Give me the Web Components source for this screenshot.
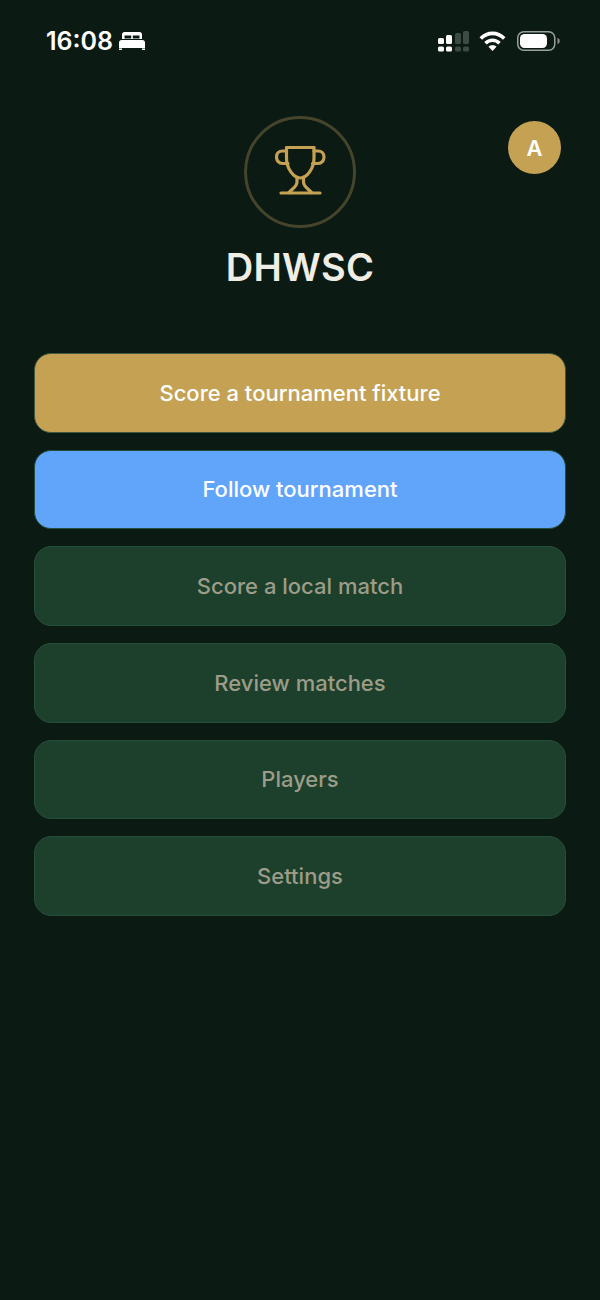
<!DOCTYPE html>
<html lang="en">
<head>
<meta charset="utf-8">
<title>DHWSC</title>
<style>
    html, body { margin: 0; height: 100%; background: #0c1a14; }
    body { font-family: Inter, "Liberation Sans", sans-serif; }
</style>
</head>
<body>
<home-screen>
    <status-bar slot="status" time="16:08"></status-bar>
    <club-header slot="header" name="DHWSC"></club-header>
    <avatar-badge slot="avatar">A</avatar-badge>
    <menu-button variant="gold">Score a tournament fixture</menu-button>
    <menu-button variant="blue">Follow tournament</menu-button>
    <menu-button>Score a local match</menu-button>
    <menu-button>Review matches</menu-button>
    <menu-button>Players</menu-button>
    <menu-button>Settings</menu-button>
</home-screen>
<script>
class HomeScreen extends HTMLElement {
    constructor() {
        super();
        this.attachShadow({ mode: 'open' });
        this.shadowRoot.innerHTML = `
            <style>
                :host { display: block; height: 1300px; position: relative; background: #0c1a14; overflow: hidden; }
                .menu { display: flex; flex-direction: column; gap: 17px; padding: 0 34px; }
                ::slotted(avatar-badge) { position: absolute; top: 121px; left: 508px; }
            </style>
            <slot name="status"></slot>
            <slot name="header"></slot>
            <slot name="avatar"></slot>
            <div class="menu"><slot></slot></div>
        `;
    }
}

class StatusBar extends HTMLElement {
    constructor() {
        super();
        this.attachShadow({ mode: 'open' });
    }

    connectedCallback() {
        this.shadowRoot.innerHTML = `
            <style>
                :host { display: flex; justify-content: space-between; align-items: center; height: 82px; padding: 0 40px 0 46px; box-sizing: border-box; color: #fff; }
                .left { display: flex; align-items: center; gap: 6px; font: 600 25px/1 Inter, sans-serif; }
                .right { display: flex; align-items: center; gap: 10px; }
                svg { display: block; }
            </style>
            <div class="left">
                <span>${this.getAttribute('time')}</span>
                <svg width="26" height="18" viewBox="0 0 26 18" fill="#fff">
                    <path fill-rule="evenodd" d="M3 2.500C3 1 4 0 5.500 0h15C22 0 23 1 23 2.500V7H3zM5.500 3.500V6.500h6.700V3.500zM13.800 3.500V6.500h6.700V3.500z"/>
                    <path d="M2.500 8h21c1.200 0 2.500 1 2.500 2.500V16H0v-5.500C0 9 1.300 8 2.500 8zM0 16.500h3V18H0zM23 16.500h3V18h-3z"/>
                </svg>
            </div>
            <div class="right">
                <svg width="31" height="21" viewBox="0 0 31 21">
                    <g fill="#fff">
                        <rect x="0" y="7" width="6" height="6" rx="1.500"/>
                        <rect x="0" y="15.500" width="6" height="5" rx="1.500"/>
                        <rect x="8" y="4" width="6" height="9" rx="1.500"/>
                        <rect x="8" y="15.500" width="6" height="5" rx="1.500"/>
                    </g>
                    <g fill="#3e4a44">
                        <rect x="17" y="2" width="6" height="11" rx="1.500"/>
                        <rect x="17" y="15.500" width="6" height="5" rx="1.500"/>
                        <rect x="25" y="0" width="6" height="13" rx="1.500"/>
                        <rect x="25" y="15.500" width="6" height="5" rx="1.500"/>
                    </g>
                </svg>
                <svg width="27" height="20" viewBox="0 0 27 20" fill="none" stroke="#fff" stroke-width="3.600">
                    <path d="M1.800 7.500C8.500 .6 18.500 .6 25.200 7.500"/>
                    <path d="M6.500 12.200c4-4 10-4 14 0"/>
                    <path d="M13.500 20l-4-4.300c2.200-1.900 5.800-1.900 8 0z" fill="#fff" stroke="none"/>
                </svg>
                <svg width="43" height="20" viewBox="0 0 43 20" style="margin-left:1px">
                    <rect x=".75" y=".75" width="37" height="18.500" rx="6" fill="none" stroke="#9aa19d" stroke-width="1.500"/>
                    <rect x="3" y="3" width="27" height="14" rx="4.500" fill="#fff"/>
                    <path d="M40.500 7c1.500.4 2.200 1.500 2.200 3s-.7 2.600-2.200 3z" fill="#8b928e"/>
                </svg>
            </div>
        `;
    }
}

class ClubHeader extends HTMLElement {
    constructor() {
        super();
        this.attachShadow({ mode: 'open' });
    }

    connectedCallback() {
        this.shadowRoot.innerHTML = `
            <style>
                :host { display: flex; flex-direction: column; align-items: center; padding: 34px 0 0; height: 271px; box-sizing: border-box; }
                .ring { width: 112px; height: 112px; box-sizing: border-box; border-radius: 50%; border: 3px solid #45452b; display: flex; align-items: center; justify-content: center; }
                h1 { margin: 16px 0 0; font: 600 38px/46px Inter, sans-serif; letter-spacing: 0.3px; color: #f0ede5; }
                svg { display: block; margin-top: -2px; }
            </style>
            <div class="ring">
                <svg width="51" height="50" viewBox="0 0 51 50" fill="none" stroke="#c5a253" stroke-width="3.200" stroke-linecap="round" stroke-linejoin="round">
                    <path d="M11.500 1.500H39V12C39 22.500 32 32 25.250 32C18.500 32 11.500 22.500 11.500 12z"/>
                    <path d="M11.500 5H7.500C4 5 1.500 7.500 1.500 11C1.500 14.500 4 17.500 7.500 17.500H13"/>
                    <path d="M39 5H43C46.500 5 49 7.500 49 11C49 14.500 46.500 17.500 43 17.500H37.500"/>
                    <path d="M22 31V36C22 40.500 18 42 14 46.500"/>
                    <path d="M28.500 31V36C28.500 40.500 32.500 42 36.500 46.500"/>
                    <path d="M6 47H45"/>
                </svg>
            </div>
            <h1>${this.getAttribute('name')}</h1>
        `;
    }
}

class AvatarBadge extends HTMLElement {
    constructor() {
        super();
        this.attachShadow({ mode: 'open' });
        this.shadowRoot.innerHTML = `
            <style>
                :host { display: flex; align-items: center; justify-content: center; width: 53px; height: 53px; border-radius: 50%; background: #c5a253; color: #fff; font: 600 22px/1 Inter, sans-serif; }
            </style>
            <slot></slot>
        `;
    }
}

class MenuButton extends HTMLElement {
    constructor() {
        super();
        this.attachShadow({ mode: 'open' });
        this.shadowRoot.innerHTML = `
            <style>
                :host { display: flex; align-items: center; justify-content: center; height: 79.670px; box-sizing: border-box; border-radius: 17px; border: 1.500px solid #24503a; background: #1d402c; color: #9c9c88; font: 500 22px/1 Inter, sans-serif; }
                :host([variant="gold"]) { background: #c5a253; color: #fff; border-color: #3f5a40; }
                :host([variant="blue"]) { background: #60a5fa; color: #fff; border-color: #24503a; }
            </style>
            <slot></slot>
        `;
    }
}

customElements.define('home-screen', HomeScreen);
customElements.define('status-bar', StatusBar);
customElements.define('club-header', ClubHeader);
customElements.define('avatar-badge', AvatarBadge);
customElements.define('menu-button', MenuButton);
</script>
</body>
</html>
